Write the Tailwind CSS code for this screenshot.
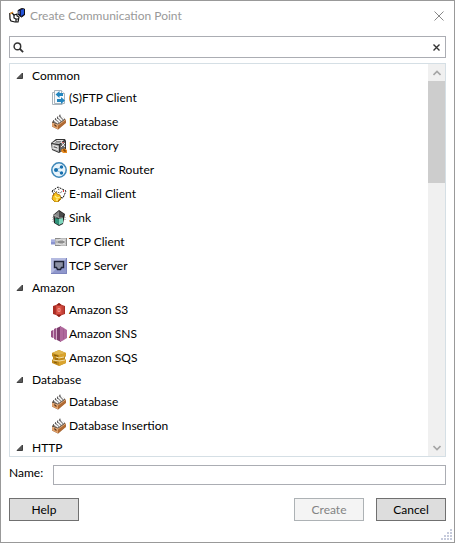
<!DOCTYPE html>
<html lang="en">
<head>
<meta charset="utf-8">
<title>Create Communication Point</title>
<script src="https://cdn.jsdelivr.net/npm/@tailwindcss/browser@4"></script>
</head>
<body class="font-['Lato','Open_Sans',sans-serif] text-xs text-black">
<svg class="hidden" aria-hidden="true">
  <symbol id="arrow" viewBox="0 0 8 8"><path d="M6.5 1v5.5H1z" fill="#595959" stroke="#404040"/></symbol>
  <symbol id="ftp" viewBox="0 0 16 16">
    <path d="M1.5 2.5H4M1.5 2.5v12h10" fill="none" stroke="#a9b4bc"/>
    <path d="M3.500.5h7l3 3v10h-10z" fill="#f7fafc" stroke="#a9b4bc"/><path d="M10.500.5v3h3" fill="#fff" stroke="#a9b4bc"/>
    <path d="M4.500 4.500 8.500 1v2h3.500v3h-3.500v2z" fill="#2486bf"/><path d="M14 10.500 10 7v2H6v3h4v2z" fill="#2486bf"/>
  </symbol>
  <symbol id="db" viewBox="0 0 16 16">
    <path d="M1 8 9 1l5 4 1 3-8 7.500-6-3z" fill="#5a4330"/>
    <path d="M2 8 9 1l5 4-7 5z" fill="#8b8b8b"/>
    <path d="M3 6l4 3M5 4l4 4M7 2.500l4 4M9.500 1l3.500 4" stroke="#fff" stroke-width="1.300"/>
    <path d="M2.500 6V8M4.500 4V6M6.500 2.500V5M9 .5V3" stroke="#555" stroke-width=".8"/>
    <path d="M1 9l6 2v4.500L1 12.500z" fill="#e0a06a"/><path d="M7 11l8-5.500V9l-8 6.500z" fill="#b06a32"/><path d="M1 9l6 2 8-5.500" fill="none" stroke="#edbd90" stroke-width=".8"/>
    <path d="M3 10.800l2 .7v1.300" fill="none" stroke="#4a2b12"/>
  </symbol>
  <symbol id="dir" viewBox="0 0 16 16">
    <path d="M0 5 5 1h9l1 2v8l-7 4-7-3z" fill="#333"/>
    <path d="M1 5l5-3h7L8 6z" fill="#e2e2e2"/><path d="M1 6l7 1.500V14l-7-3z" fill="#b5b5b5"/><path d="M9 7l5-4v7l-5 4z" fill="#666"/>
    <path d="M2 7.500l5 1.500M2 10l5 1.500" stroke="#f2f2f2"/><path d="M3 8.800l3 1" stroke="#555"/><path d="M5 3.500h5M4 4.800h5" stroke="#888"/>
    <path d="M10 4l4 5M14 5l-4 4" stroke="#eee"/><path d="M11 4.500h2" stroke="#c66"/>
    <path d="M11 11h2v-1l3 2v3h-4l-2-2z" fill="#e88b20"/><path d="M12 12h2v2" fill="none" stroke="#633000"/>
  </symbol>
  <symbol id="router" viewBox="0 0 16 16">
    <circle cx="8" cy="8" r="7.200" fill="#e8f4fb" stroke="#3d87b8" stroke-width="1.500"/>
    <path d="M10.500 5 5 8l5.500 3" fill="none" stroke="#8abbd9"/><circle cx="5" cy="8" r="2" fill="#166fae"/><circle cx="10.500" cy="5" r="1.700" fill="#166fae"/><circle cx="10.500" cy="11" r="1.700" fill="#166fae"/>
  </symbol>
  <symbol id="mail" viewBox="0 0 16 16">
    <path d="M1 5 7 1l8 4-3 7-8-2z" fill="#fff" stroke="#111" stroke-dasharray="2 1"/><path d="M3 5l6 2 4-3M7 3l2 1" fill="none" stroke="#333" stroke-dasharray="1 1"/>
    <path d="M12 5h1" stroke="#d33" stroke-width="2"/>
    <path d="M2 9l3-3 1 2 3 1 1 4-3 3H4l-3-3z" fill="#f6c21c" stroke="#986000" stroke-width=".7"/><path d="M4 10l2 2 3-1M5 14h2" fill="none" stroke="#ffef8b" stroke-width="1.300"/><path d="M3 8l-1 2M9 13l-2 2" stroke="#b76d00"/>
  </symbol>
  <symbol id="sink" viewBox="0 0 16 16">
    <path d="M2 5 8 0l6 4-2 10-4 2-5-3z" fill="#222"/>
    <path d="M3 5l5-4v6l-4 1z" fill="#888"/><path d="M8 1l5 3-2 4-3-1z" fill="#4c4c4c"/><path d="M2 6l2-1 4 3h4" fill="none" stroke="#aaa"/>
    <path d="M4 8l4 1v6l-4-2z" fill="#2f8f77"/><path d="M8 9l4-1v5l-4 2z" fill="#7fd6bc"/><path d="M2 7v5M14 7v4" stroke="#999" stroke-dasharray="1 1"/>
  </symbol>
  <symbol id="tcpc" viewBox="0 0 16 16">
    <path d="M0 5.500h4v5H0z" fill="#8b94d0"/><path d="M0 7h4" stroke="#c3c9ef"/>
    <path d="M4 4h12v8H4z" fill="#8b8b8b"/><path d="M4 5h11v6H4z" fill="#b5b5b5"/><path d="M5 6h3l2-1h5M5 10h3l2 1h5" fill="none" stroke="#eee"/><path d="M7 8h7" stroke="#666"/><path d="M12 6.500h2v3h-2" fill="none" stroke="#ddd"/>
  </symbol>
  <symbol id="tcps" viewBox="0 0 16 16">
    <path d="M0 0h16v16H0z" fill="#8f97cc"/><path d="M0 0h16L0 16z" fill="#b4bae0"/><path d="M15.500 0v15.500H0" fill="none" stroke="#7c84bd"/>
    <path d="M3.500 3.500h9v6h-2l-1 2h-3l-1-2h-2z" fill="#8c91a5" stroke="#1c2035" stroke-width="1.400"/>
  </symbol>
  <symbol id="s3" viewBox="0 0 16 16">
    <path d="M2 4l3-1v10l-3-1z" fill="#a82d24"/><path d="M14 4l-3-1v10l3-1z" fill="#a82d24"/><path d="M5 3 8 1l3 2v10l-3 2-3-2z" fill="#dc5044"/><path d="M8 1l3 2.500H5zM5 12.500h6L8 15z" fill="#862018"/>
    <path d="M7 6.500h2v3H7z" fill="none" stroke="#f09a90" stroke-width=".9"/><path d="M5.200 3.500v9M10.800 3.500v9" stroke="#c4443a" stroke-width=".8"/><path d="M12 4v8" stroke="#d65348"/>
  </symbol>
  <symbol id="sns" viewBox="0 0 16 16">
    <path d="M0 5l2-1v8l-2-1zM3 3l2-1v12l-2-1z" fill="#995187"/><path d="M6 2l4-2v16l-4-2z" fill="#7d3c6c"/><path d="M9 0l3 1.500 4 2.500v8l-4 2.500L9 16z" fill="#b0699c"/><path d="M2.500 4v8M5.500 2v12" stroke="#d2a9c6"/><path d="M12.500 3v10" stroke="#a35c90"/>
  </symbol>
  <symbol id="sqs" viewBox="0 0 16 16">
    <path d="M1 3l7-3 7 3v3l-1 1v2l1 1v3l-7 3-7-3v-3l1-1V7L1 6z" fill="#c18b1b"/><path d="M1 3l7-3 7 3-7 2z" fill="#e0b64e"/><path d="M8 5l7-2v3l-7 2zM8 11l7-1v3l-7 3z" fill="#d9a32e"/>
    <path d="M5 7l3 1 5-1M2 10l6 1 6-1" fill="none" stroke="#fff1c7" stroke-width=".8"/><path d="M3 5l4 1.200M4 9h3M3 12l3 1" stroke="#80570b"/>
  </symbol>
</svg>

<main class="flex h-screen flex-col border border-[#999] bg-white px-2 pb-[21px]">
  <header class="flex h-[35px] shrink-0 items-center pb-[5px]">
    <svg class="size-4 shrink-0" viewBox="0 0 16 16" aria-hidden="true">
      <path d="M.8 5.500 3 5l2 2 3-1v2l2 1-1 5H6l-4-1-1-2z" fill="#fff" stroke="#111" stroke-width="1.200"/><path d="M1 6l3-2" stroke="#ed9a35" stroke-width="1.400"/><path d="M5 7v3l2 1v3M7 11h3" fill="none" stroke="#111" stroke-width="1.200"/>
      <path d="M9 2.500 12.500.5 15.500 1v6l-3 2-3-2z" fill="#121a4d" stroke="#111"/><path d="M12 2l3-1v5l-3 2z" fill="#2455d9"/><path d="M10 3v3" stroke="#93a7ed"/>
    </svg>
    <h1 class="ml-[5px] flex-1 text-[#999]">Create Communication Point</h1>
    <button type="button" aria-label="Close" class="p-[2px]"><svg class="size-[10px]" viewBox="0 0 10 10"><path d="M.5.5l9 9M9.500.5l-9 9" stroke="#888"/></svg></button>
  </header>

  <div class="flex h-[22px] shrink-0 items-center border border-[#abadb3] pr-[5px] pl-[3px]">
    <svg class="size-[11px]" viewBox="0 0 12 12" aria-hidden="true"><circle cx="4.800" cy="4.800" r="3.600" fill="none" stroke="#333" stroke-width="1.600"/><path d="M7.500 7.500 11 11" stroke="#333" stroke-width="2"/></svg>
    <input type="text" aria-label="Search" class="h-full min-w-0 flex-1 px-1 outline-none">
    <button type="button" aria-label="Clear search"><svg class="size-[7px]" viewBox="0 0 7 7"><path d="M.5.5l6 6M6.500.5l-6 6" stroke="#333" stroke-width="1.400"/></svg></button>
  </div>

  <section class="mt-[5px] flex min-h-0 flex-1 border border-[#d5dfe5]" aria-label="Communication point types">
    <div class="min-w-0 flex-1 overflow-hidden pt-[2px]">
      <h2 class="flex h-5 items-center gap-2 pl-[6px]"><svg class="size-2"><use href="#arrow"/></svg>Common</h2>
      <ul class="pl-[41px]">
        <li class="flex h-6 items-center gap-[2px]"><svg class="size-4"><use href="#ftp"/></svg>(S)FTP Client</li>
        <li class="flex h-6 items-center gap-[2px]"><svg class="size-4"><use href="#db"/></svg>Database</li>
        <li class="flex h-6 items-center gap-[2px]"><svg class="size-4"><use href="#dir"/></svg>Directory</li>
        <li class="flex h-6 items-center gap-[2px]"><svg class="size-4"><use href="#router"/></svg>Dynamic Router</li>
        <li class="flex h-6 items-center gap-[2px]"><svg class="size-4"><use href="#mail"/></svg>E-mail Client</li>
        <li class="flex h-6 items-center gap-[2px]"><svg class="size-4"><use href="#sink"/></svg>Sink</li>
        <li class="flex h-6 items-center gap-[2px]"><svg class="size-4"><use href="#tcpc"/></svg>TCP Client</li>
        <li class="flex h-6 items-center gap-[2px]"><svg class="size-4"><use href="#tcps"/></svg>TCP Server</li>
      </ul>
      <h2 class="flex h-5 items-center gap-2 pl-[6px]"><svg class="size-2"><use href="#arrow"/></svg>Amazon</h2>
      <ul class="pl-[41px]">
        <li class="flex h-6 items-center gap-[2px]"><svg class="size-4"><use href="#s3"/></svg>Amazon S3</li>
        <li class="flex h-6 items-center gap-[2px]"><svg class="size-4"><use href="#sns"/></svg>Amazon SNS</li>
        <li class="flex h-6 items-center gap-[2px]"><svg class="size-4"><use href="#sqs"/></svg>Amazon SQS</li>
      </ul>
      <h2 class="flex h-5 items-center gap-2 pl-[6px]"><svg class="size-2"><use href="#arrow"/></svg>Database</h2>
      <ul class="pl-[41px]">
        <li class="flex h-6 items-center gap-[2px]"><svg class="size-4"><use href="#db"/></svg>Database</li>
        <li class="flex h-6 items-center gap-[2px]"><svg class="size-4"><use href="#db"/></svg>Database Insertion</li>
      </ul>
      <h2 class="flex h-5 items-center gap-2 pl-[6px]"><svg class="size-2"><use href="#arrow"/></svg>HTTP</h2>
    </div>
    <div class="flex w-[17px] shrink-0 flex-col bg-[#f0f0f0]">
      <button type="button" aria-label="Scroll up" class="flex h-[17px] items-center justify-center"><svg class="h-[6px] w-2" viewBox="0 0 8 6"><path d="M.5 5 4 1.500 7.500 5" fill="none" stroke="#a5a5a5" stroke-width="1.600"/></svg></button>
      <div class="flex-1"><div class="h-[102px] bg-[#cdcdcd]"></div></div>
      <button type="button" aria-label="Scroll down" class="flex h-[17px] items-center justify-center"><svg class="h-[6px] w-2" viewBox="0 0 8 6"><path d="M.5 1 4 4.500 7.500 1" fill="none" stroke="#a5a5a5" stroke-width="1.600"/></svg></button>
    </div>
  </section>

  <div class="mt-2 flex shrink-0 items-start">
    <label for="name" class="w-11">Name:</label>
    <input id="name" type="text" class="h-5 min-w-0 flex-1 border border-[#abadb3] px-1 outline-none">
  </div>

  <div class="mt-[13px] flex shrink-0 gap-3">
    <button type="button" class="h-[23px] w-[70px] border border-[#707070] bg-[#ddd]">Help</button>
    <button type="button" disabled class="ml-auto h-[23px] w-[70px] border border-[#adb2b5] bg-[#f4f4f4] text-[#838383]">Create</button>
    <button type="button" class="h-[23px] w-[70px] border border-[#707070] bg-[#ddd]">Cancel</button>
  </div>
  <svg class="absolute right-[2px] bottom-[2px] size-3" viewBox="0 0 12 12" aria-hidden="true"><path d="M9 0h2v2H9zM6 3h2v2H6zM9 3h2v2H9zM3 6h2v2H3zM6 6h2v2H6zM9 6h2v2H9zM0 9h2v2H0zM3 9h2v2H3zM6 9h2v2H6zM9 9h2v2H9z" fill="#c6cbdc"/></svg>
</main>
</body>
</html>
